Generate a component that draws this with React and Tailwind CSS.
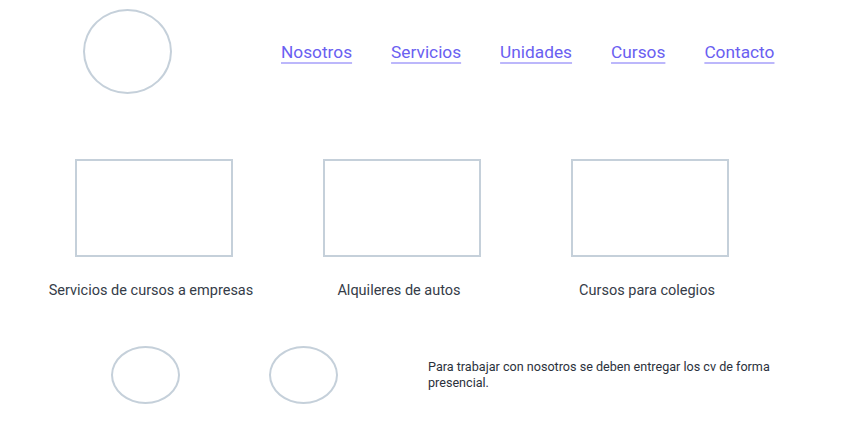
export default function App() {
  const links = ["Nosotros", "Servicios", "Unidades", "Cursos", "Contacto"];
  const cards = [
    "Servicios de cursos a empresas",
    "Alquileres de autos",
    "Cursos para colegios",
  ];
  return (
    <div className="w-[852px] h-[448px] bg-white overflow-hidden" style={{ fontFamily: "Roboto, 'Liberation Sans', sans-serif" }}>
      <header className="flex items-center pt-[9px]">
        <div className="ml-[83px] w-[89px] h-[85px] rounded-[50%] border-2 border-[#c5d0da] shrink-0" />
        <nav className="ml-[109px] flex gap-[39px]">
          {links.map((l) => (
            <a
              key={l}
              href="#"
              className="text-[17.3px] leading-[24px] text-[#6a60f1] underline decoration-2 decoration-[#bcb7fb] underline-offset-[4px]"
            >
              {l}
            </a>
          ))}
        </nav>
      </header>

      <section className="flex pl-[30px] mt-[65px]">
        {cards.map((c) => (
          <div key={c} className="w-[248px] flex flex-col items-center">
            <div className="w-[158px] h-[98px] border-2 border-[#c5d0da]" />
            <p className="mt-[24px] text-[14.5px] leading-[20px] text-[#353c48] -translate-x-[3px]">{c}</p>
          </div>
        ))}
      </section>

      <section className="flex items-start mt-[45px] pl-[111px]">
        <div className="w-[69px] h-[58px] rounded-[50%] border-2 border-[#c5d0da] shrink-0" />
        <div className="ml-[89px] w-[69px] h-[58px] rounded-[50%] border-2 border-[#c5d0da] shrink-0" />
        <p className="ml-[90px] mt-[13px] w-[355px] text-[12.6px] leading-[16px] text-[#2b313c]">
          Para trabajar con nosotros se deben entregar los cv de forma presencial.
        </p>
      </section>
    </div>
  );
}
